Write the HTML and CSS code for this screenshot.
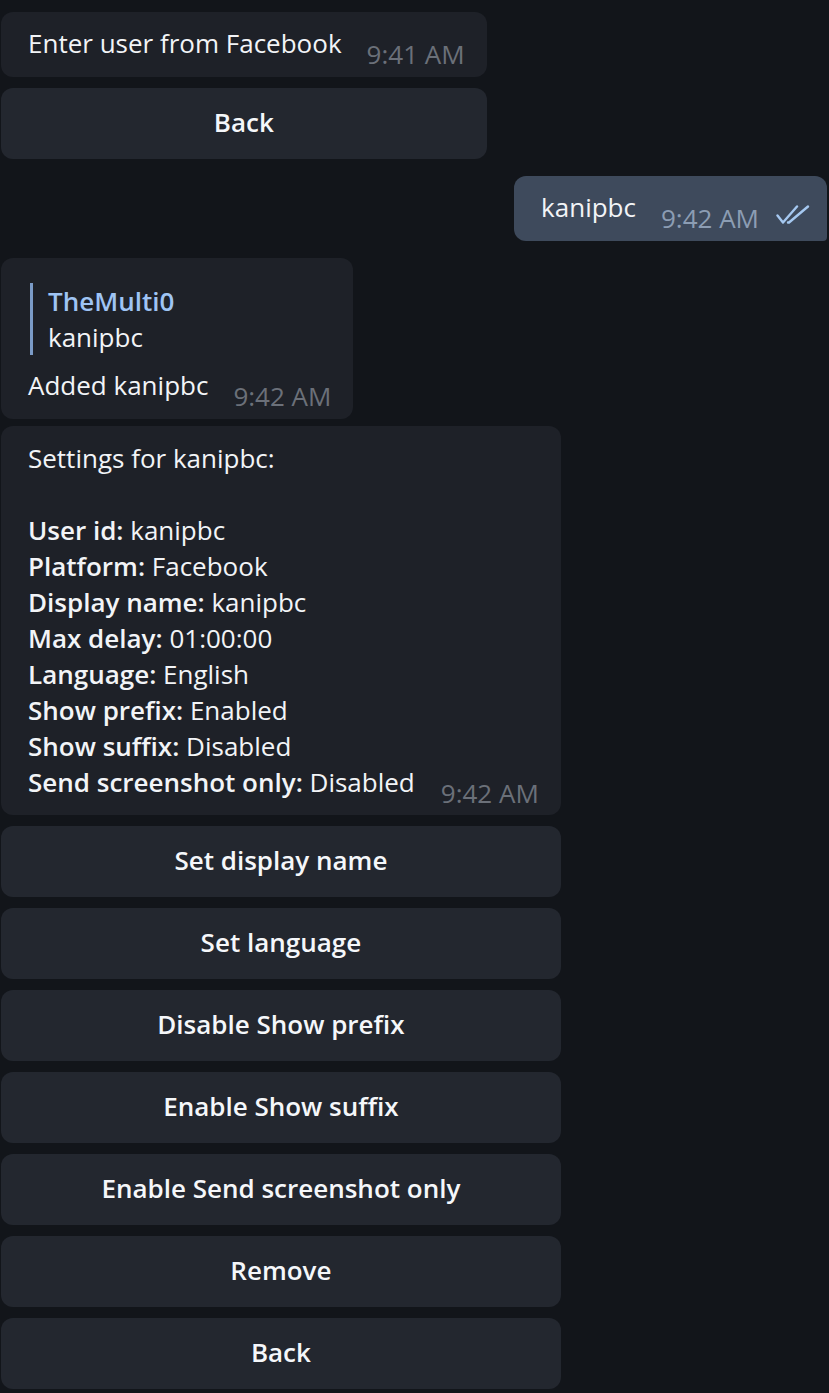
FILE: index.html
```html
<!DOCTYPE html>
<html>
<head>
<meta charset="utf-8">
<link rel="stylesheet" href="styles.css">
</head>
<body>
<div class="chat">
  <div class="group group-a">
    <div class="bubble in">
      <div class="text">Enter user from Facebook</div>
      <span class="time">9:41 AM</span>
    </div>
    <div class="kb">
      <div class="btn">Back</div>
    </div>
  </div>

  <div class="bubble out">
    <div class="text">kanipbc</div>
    <span class="time">9:42 AM</span>
    <svg class="checks" width="36" height="22" viewBox="0 0 36 22">
      <path d="M1.5 11.5 L7 18.5 L21 2.5" fill="none" stroke="#a5c8f0" stroke-width="2.4" stroke-linecap="round" stroke-linejoin="round"/>
      <path d="M12 18.5 L13 18.5 L32 2.5" fill="none" stroke="#a5c8f0" stroke-width="2.4" stroke-linecap="round" stroke-linejoin="round"/>
    </svg>
  </div>

  <div class="bubble in reply">
    <div class="col">
      <div class="quote">
        <div class="qname">TheMulti0</div>
        <div class="qtext">kanipbc</div>
      </div>
      <div class="text">Added kanipbc</div>
    </div>
    <span class="time">9:42 AM</span>
  </div>

  <div class="group group-b">
    <div class="bubble in settings">
      <div class="text">
        <div>Settings for kanipbc:</div>
        <div class="blank">&nbsp;</div>
        <div><b>User id:</b> kanipbc</div>
        <div><b>Platform:</b> Facebook</div>
        <div><b>Display name:</b> kanipbc</div>
        <div><b>Max delay:</b> 01:00:00</div>
        <div><b>Language:</b> English</div>
        <div><b>Show prefix:</b> Enabled</div>
        <div><b>Show suffix:</b> Disabled</div>
        <div><b>Send screenshot only:</b> Disabled</div>
      </div>
      <span class="time">9:42 AM</span>
    </div>
    <div class="kb">
      <div class="btn">Set display name</div>
      <div class="btn">Set language</div>
      <div class="btn">Disable Show prefix</div>
      <div class="btn">Enable Show suffix</div>
      <div class="btn">Enable Send screenshot only</div>
      <div class="btn">Remove</div>
      <div class="btn">Back</div>
    </div>
  </div>
</div>
</body>
</html>
```

FILE: styles.css
```css
html, body {
  margin: 0;
  padding: 0;
  background: #12151a;
}
body {
  width: 829px;
  height: 1393px;
  overflow: hidden;
  font-family: "Open Sans", "Noto Sans", sans-serif;
  font-size: 26px;
  line-height: 36px;
  color: #f2f4f7;
}
.chat {
  display: flex;
  flex-direction: column;
  padding: 12px 0 0 1px;
}
.group {
  display: flex;
  flex-direction: column;
  gap: 11px;
  width: fit-content;
}
.bubble {
  display: flex;
  align-items: flex-end;
  width: fit-content;
  border-radius: 12px;
  padding: 13px 22px 16px 27px;
  box-sizing: border-box;
}
.in {
  background: #1e2128;
}
.group .bubble {
  width: 100%;
}
.time {
  flex: none;
  margin-left: 25px;
  font-size: 26px;
  line-height: 22px;
  margin-bottom: -4px;
  color: #6b7079;
  white-space: nowrap;
}
.kb {
  display: flex;
  flex-direction: column;
  gap: 11px;
}
.btn {
  height: 71px;
  box-sizing: border-box;
  padding-bottom: 3px;
  border-radius: 12px;
  background: #23272f;
  display: flex;
  align-items: center;
  justify-content: center;
  font-weight: 600;
  color: #f5f7fa;
}
.out {
  align-self: flex-end;
  margin: 17px 2px 0 0;
  background: #3e4a5c;
  padding: 13px 15px 16px 27px;
  border-radius: 12px 12px 4px 12px;
}
.out .time {
  color: #8c9db3;
}
.checks {
  flex: none;
  margin-left: 17px;
  margin-bottom: -1px;
}
.reply {
  margin-top: 17px;
  padding-top: 25px;
}
.quote {
  border-left: 3px solid #7b9bc7;
  padding-left: 15px;
  margin-left: 2px;
  margin-bottom: 12px;
}
.qname {
  font-weight: 600;
  color: #9fc4f4;
}
.group-b {
  margin-top: 7px;
}
.settings {
  padding-top: 14px;
  padding-bottom: 15px;
}
.settings b {
  font-weight: 600;
}
.settings .time {
  margin-left: 26px;
}
```
